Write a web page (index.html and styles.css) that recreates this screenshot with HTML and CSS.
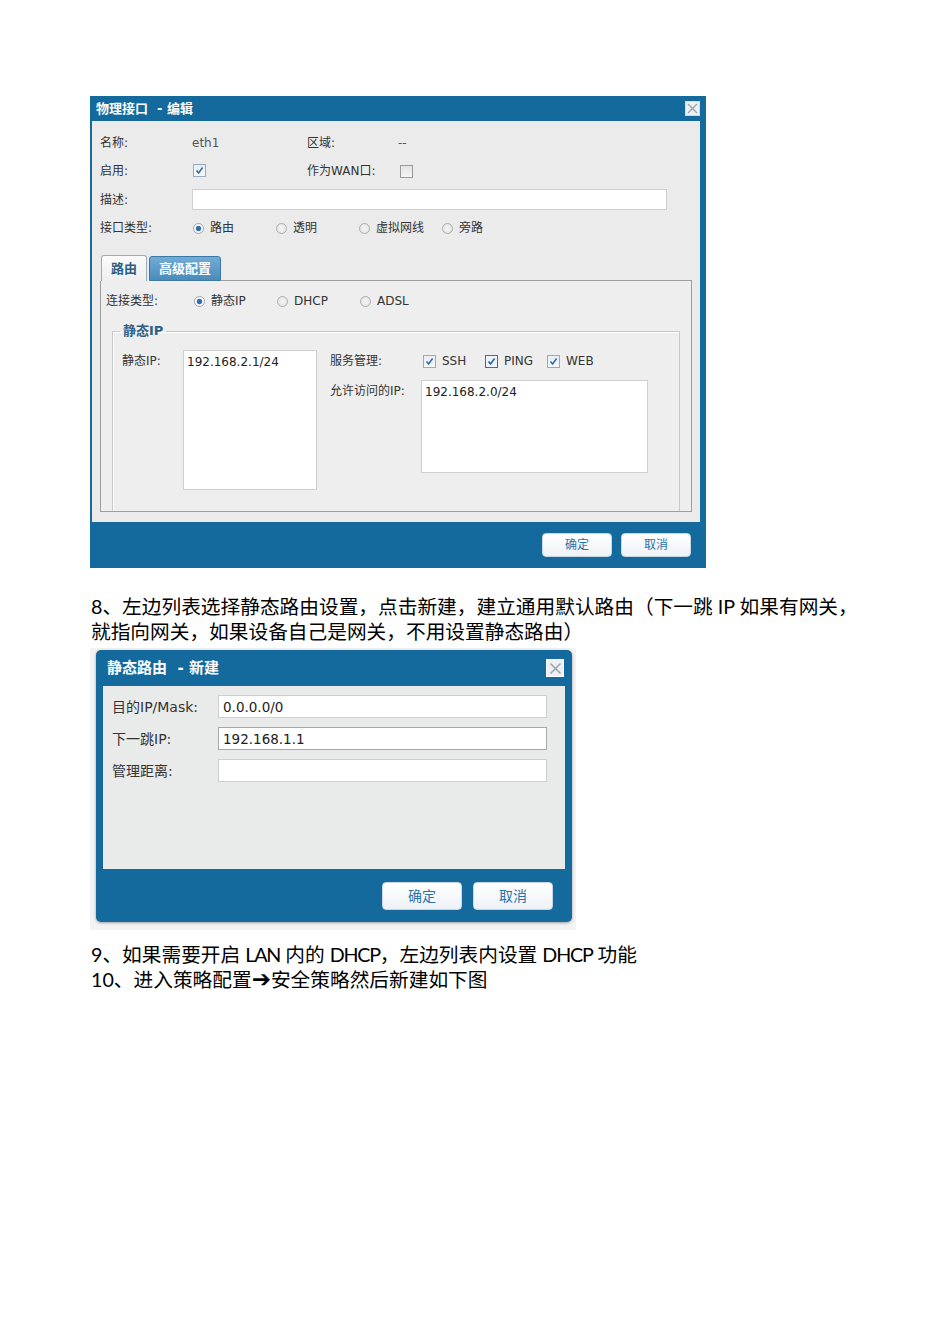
FILE: index.html
```html
<!DOCTYPE html>
<html lang="zh-CN">
  <head>
    <meta charset="UTF-8" />
    <meta name="viewport" content="width=device-width, initial-scale=1.0" />
    <title>接口与静态路由配置</title>
    <link rel="stylesheet" href="styles.css">
  </head>
  <body>
    <div class="page">
      <!-- 物理接口编辑窗口 -->
      <div class="dlg dlg-iface">
        <div class="dlg-head">
          <span class="dlg-title">物理接口&nbsp; - 编辑</span>
          <span class="dlg-close">
            <svg width="11" height="11" viewBox="0 0 11 11"><path d="M1 1L10 10M10 1L1 10" stroke="#9aa4ad" stroke-width="1.4"/></svg>
          </span>
        </div>
        <div class="dlg-body">
          <div class="row">
            <span class="c1">名称:</span><span class="c2 val">eth1</span><span class="c3">区域:</span><span class="val">--</span>
          </div>
          <div class="row">
            <span class="c1">启用:</span>
            <span class="c2"><span class="chk on"><svg width="9" height="9" viewBox="0 0 9 9"><path d="M1.5 4.5L3.6 7L7.6 1.5" fill="none" stroke="#3767a8" stroke-width="1.5"/></svg></span></span>
            <span class="c3">作为WAN口:</span><span class="chk off"></span>
          </div>
          <div class="row row-desc">
            <span class="c1">描述:</span><span class="field desc-field"></span>
          </div>
          <div class="row">
            <span class="c1">接口类型:</span>
            <span class="opt"><span class="radio on"></span>路由</span>
            <span class="opt"><span class="radio"></span>透明</span>
            <span class="opt"><span class="radio"></span>虚拟网线</span>
            <span class="opt"><span class="radio"></span>旁路</span>
          </div>

          <div class="tabs">
            <span class="tab tab-on">路由</span>
            <span class="tab">高级配置</span>
            <span class="tab-fill"></span>
          </div>
          <div class="tab-panel">
            <div class="row conn-row">
              <span class="conn-lbl">连接类型:</span>
              <span class="opt"><span class="radio on"></span>静态IP</span>
              <span class="opt"><span class="radio"></span>DHCP</span>
              <span class="opt"><span class="radio"></span>ADSL</span>
            </div>
            <fieldset class="group">
              <legend>静态IP</legend>
              <div class="group-cols">
                <div class="ip-col">
                  <span class="ip-lbl">静态IP:</span>
                  <div class="area ip-area">192.168.2.1/24</div>
                </div>
                <div class="svc-col">
                  <div class="svc-row">
                    <span class="svc-lbl">服务管理:</span>
                    <span class="copt"><span class="chk on"><svg width="9" height="9" viewBox="0 0 9 9"><path d="M1.5 4.5L3.6 7L7.6 1.5" fill="none" stroke="#3767a8" stroke-width="1.5"/></svg></span>SSH</span>
                    <span class="copt"><span class="chk on focus"><svg width="9" height="9" viewBox="0 0 9 9"><path d="M1.5 4.5L3.6 7L7.6 1.5" fill="none" stroke="#2b5fa6" stroke-width="1.6"/></svg></span>PING</span>
                    <span class="copt"><span class="chk on"><svg width="9" height="9" viewBox="0 0 9 9"><path d="M1.5 4.5L3.6 7L7.6 1.5" fill="none" stroke="#3767a8" stroke-width="1.5"/></svg></span>WEB</span>
                  </div>
                  <div class="svc-row allow-row">
                    <span class="svc-lbl">允许访问的IP:</span>
                    <div class="area allow-area">192.168.2.0/24</div>
                  </div>
                </div>
              </div>
            </fieldset>
          </div>
        </div>
        <div class="dlg-foot">
          <span class="btn">确定</span>
          <span class="btn">取消</span>
        </div>
      </div>

      <p class="doc-text step8">8、左边列表选择静态路由设置，点击新建，建立通用默认路由（下一跳 IP 如果有网关，就指向网关，如果设备自己是网关，不用设置静态路由）</p>

      <!-- 静态路由新建窗口 -->
      <div class="shot">
        <div class="dlg dlg-route">
          <div class="dlg-head">
            <span class="dlg-title">静态路由&nbsp; - 新建</span>
            <span class="dlg-close">
              <svg width="13" height="13" viewBox="0 0 13 13"><path d="M1.5 1.5L11.5 11.5M11.5 1.5L1.5 11.5" stroke="#9aa4ad" stroke-width="1.5"/></svg>
            </span>
          </div>
          <div class="dlg-body">
            <div class="route-row"><span class="route-lbl">目的IP/Mask:</span><span class="field route-field">0.0.0.0/0</span></div>
            <div class="route-row"><span class="route-lbl">下一跳IP:</span><span class="field route-field focus">192.168.1.1</span></div>
            <div class="route-row"><span class="route-lbl">管理距离:</span><span class="field route-field"></span></div>
          </div>
          <div class="dlg-foot">
            <span class="btn">确定</span>
            <span class="btn">取消</span>
          </div>
        </div>
      </div>

      <p class="doc-text step9">9、如果需要开启 <span class="lat">LAN</span> 内的 <span class="lat">DHCP</span>，左边列表内设置 <span class="lat">DHCP</span> 功能<br>10、进入策略配置<span class="arrow">➔</span>安全策略然后新建如下图</p>
    </div>
  </body>
</html>
```

FILE: styles.css
```css
* {
  box-sizing: border-box;
}
body {
  margin: 0;
  background-color: #ffffff;
  font-family: Lato, "Noto Sans CJK SC", sans-serif;
  color: #000000;
}
.page {
  padding: 96px 0 60px 90px;
}

/* shared dialog chrome */
.dlg {
  background-color: #146a9c;
}
.dlg-head {
  display: flex;
  align-items: center;
  justify-content: space-between;
}
.dlg-title {
  color: #ffffff;
  font-weight: bold;
  white-space: nowrap;
}
.dlg-close {
  display: flex;
  align-items: center;
  justify-content: center;
  background-color: #eef1f4;
  border: 1px solid #d3dbe2;
}
.dlg-foot {
  display: flex;
  justify-content: flex-end;
  align-items: center;
}
.btn {
  display: flex;
  align-items: center;
  justify-content: center;
  background: linear-gradient(#ffffff, #eef2f6);
  border: 1px solid #c9d6e1;
  border-radius: 4px;
  color: #2a72ad;
}
.field,
.area {
  background-color: #ffffff;
  border: 1px solid #cfcfcf;
}

/* interface edit dialog */
.dlg-iface {
  width: 616px;
  font: 12px/16px "DejaVu Sans", "Noto Sans CJK SC", sans-serif;
  color: #333333;
}
.dlg-iface .dlg-head {
  height: 25px;
  padding: 0 6px;
}
.dlg-iface .dlg-title {
  font-size: 13px;
}
.dlg-iface .dlg-close {
  width: 15px;
  height: 15px;
}
.dlg-iface .dlg-body {
  margin: 0 6px 0 2px;
  background-color: #ebebeb;
  padding: 8px 8px 10px 8px;
}
.row {
  display: flex;
  align-items: center;
  height: 28px;
  white-space: nowrap;
}
.row-desc {
  height: 29px;
}
.c1 {
  width: 92px;
}
.c2 {
  width: 115px;
}
.c3 {
  width: 91px;
}
.val {
  color: #555555;
}
.c2 .chk {
  margin-left: 1px;
}
.c3 + .chk {
  margin-left: 2px;
}
.desc-field {
  width: 475px;
  height: 21px;
}
.opt {
  display: inline-flex;
  align-items: center;
  gap: 6px;
  width: 83px;
  margin-left: 1px;
  margin-right: -1px;
}
.radio {
  display: inline-block;
  width: 11px;
  height: 11px;
  border-radius: 50%;
  border: 1px solid #ababab;
  background: radial-gradient(circle, #f4f4f4 0, #e2e2e2 100%);
}
.radio.on {
  border-color: #9aa6b2;
  background: radial-gradient(circle, #2d6fae 0, #2d6fae 2.2px, #ffffff 3.2px, #e9eef3 100%);
}
.chk {
  display: inline-flex;
  align-items: center;
  justify-content: center;
  width: 13px;
  height: 13px;
  border: 1px solid #9aaabb;
  background: linear-gradient(#e6edf4, #f7f9fb);
}
.chk.off {
  border-color: #9a9a9a;
  background: linear-gradient(#e3e3e3, #f5f5f5);
}
.chk.focus {
  border-color: #3b6ea8;
  background: #eef3f9;
}

/* tabs */
.tabs {
  display: flex;
  align-items: flex-end;
  height: 26px;
  margin-top: 13px;
}
.tab {
  display: flex;
  align-items: center;
  justify-content: center;
  height: 25px;
  width: 72px;
  margin-left: 2px;
  border: 1px solid #3b78a6;
  border-radius: 3px 3px 0 0;
  background: linear-gradient(#72acd6, #4a8bbb);
  color: #ffffff;
  font-weight: bold;
  font-size: 13px;
}
.tab-on {
  height: 26px;
  width: 46px;
  margin-left: 1px;
  border-color: #9aabbb;
  border-bottom: none;
  background: linear-gradient(#fbfbfb, #eeeeee);
  color: #2d5d84;
}
.tab-fill {
  flex: 1;
  border-bottom: 1px solid #9e9e9e;
}
.tab-panel {
  height: 231px;
  overflow: hidden;
  background-color: #eeeeee;
  border: 1px solid #9e9e9e;
  border-top: none;
}
.conn-row {
  height: 22px;
  margin-top: 9px;
  padding-left: 5px;
}
.conn-lbl {
  width: 87px;
}
.group {
  margin: 11px 11px 0 11px;
  height: 240px;
  padding: 11px 0 0 9px;
  border: 1px solid #c9c9c9;
  box-shadow: inset 1px 1px 0 #ffffff;
}
.group legend {
  padding: 0 3px;
  margin-left: -2px;
  line-height: 16px;
  font-weight: bold;
  font-size: 13px;
  color: #2f5f87;
}
.group-cols {
  display: flex;
}
.ip-col {
  display: flex;
  align-items: flex-start;
}
.ip-lbl {
  width: 61px;
  line-height: 22px;
}
.area {
  padding: 3px 3px;
  color: #222222;
}
.ip-area {
  width: 134px;
  height: 140px;
}
.svc-col {
  margin-left: 13px;
}
.svc-row {
  display: flex;
  align-items: center;
  height: 22px;
}
.allow-row {
  align-items: flex-start;
  height: auto;
  margin-top: 8px;
}
.allow-row .svc-lbl {
  line-height: 22px;
}
.svc-lbl {
  width: 91px;
}
.copt {
  display: inline-flex;
  align-items: center;
  gap: 6px;
  width: 62px;
  margin-left: 2px;
  margin-right: -2px;
}
.allow-area {
  width: 227px;
  height: 93px;
}
.dlg-iface .dlg-foot {
  height: 46px;
  padding-right: 15px;
  gap: 9px;
}
.dlg-iface .btn {
  width: 70px;
  height: 24px;
}

/* document text */
.doc-text {
  margin: 0;
  padding-left: 1px;
  font-size: 19.7px;
  line-height: 25px;
}
.step8 {
  width: 776px;
  margin-top: 26px;
}
.step9 {
  margin-top: 12px;
}
.lat {
  letter-spacing: -1.2px;
}
.arrow {
  font-family: "DejaVu Sans", sans-serif;
  font-size: 23px;
  line-height: 20px;
}

/* static route dialog, shown inside a pale capture frame */
.shot {
  width: 486px;
  margin-top: 4px;
  padding: 2px 4px 8px 6px;
  background-color: #f3f3f3;
}
.dlg-route {
  border-radius: 5px;
  box-shadow: 0 1px 3px rgba(0, 0, 0, 0.35);
  font: 14px/18px "DejaVu Sans", "Noto Sans CJK SC", sans-serif;
  color: #333333;
}
.dlg-route .dlg-head {
  height: 36px;
  padding: 0 8px 0 11px;
}
.dlg-route .dlg-title {
  font-size: 15px;
}
.dlg-route .dlg-close {
  width: 18px;
  height: 18px;
  border-color: #ffffff;
}
.dlg-route .dlg-body {
  margin: 0 7px;
  height: 183px;
  background-color: #e9eaea;
  padding: 9px 18px 0 9px;
}
.route-row {
  display: flex;
  align-items: center;
  margin-bottom: 9px;
  white-space: nowrap;
}
.route-lbl {
  width: 106px;
}
.route-field {
  width: 329px;
  height: 23px;
  padding: 2px 4px;
  color: #222222;
  font-size: 13.5px;
}
.route-field.focus {
  border-color: #a8a8a8;
}
.dlg-route .dlg-foot {
  height: 53px;
  padding: 0 19px 0 0;
  gap: 11px;
}
.dlg-route .btn {
  width: 80px;
  height: 28px;
  font-size: 14px;
}
```
